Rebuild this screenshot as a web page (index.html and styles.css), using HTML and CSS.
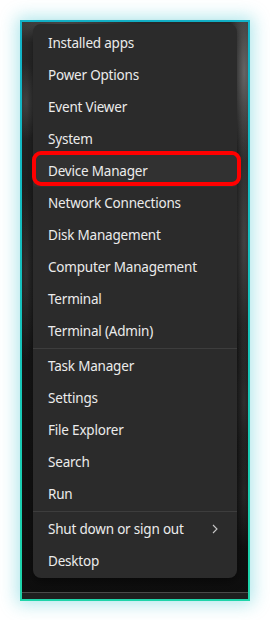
FILE: index.html
```html
<!DOCTYPE html>
<html>
<head>
<meta charset="utf-8">
<link rel="stylesheet" href="styles.css">
</head>
<body>
<div class="frame">
  <div class="desk">
    <div class="menu">
      <div class="item">Installed apps</div>
      <div class="item">Power Options</div>
      <div class="item">Event Viewer</div>
      <div class="item">System</div>
      <div class="item active">Device Manager</div>
      <div class="item">Network Connections</div>
      <div class="item">Disk Management</div>
      <div class="item">Computer Management</div>
      <div class="item">Terminal</div>
      <div class="item">Terminal (Admin)</div>
      <div class="sep"></div>
      <div class="item">Task Manager</div>
      <div class="item">Settings</div>
      <div class="item">File Explorer</div>
      <div class="item">Search</div>
      <div class="item">Run</div>
      <div class="sep"></div>
      <div class="item sub">Shut down or sign out
        <svg class="chev" width="6" height="10" viewBox="0 0 6 10"><path d="M1 1 L5 5 L1 9" fill="none" stroke="#c8c8c8" stroke-width="1.1"/></svg>
      </div>
      <div class="item">Desktop</div>
    </div>
    <div class="taskbar"></div>
  </div>
</div>
</body>
</html>
```
FILE: styles.css
```css
html, body {
  margin: 0;
  padding: 0;
  background: #ffffff;
}
body {
  width: 270px;
  height: 620px;
  overflow: hidden;
  font-family: "Segoe UI", "Noto Sans", "Liberation Sans", sans-serif;
}
.frame {
  margin: 20px 0 0 20px;
  width: 226px;
  height: 577px;
  border: 2px solid transparent;
  border-image: linear-gradient(180deg, #13b3c9 0%, #17c2bd 50%, #1fd4a9 100%) 1;
  box-shadow: 0 0 16px 3px rgba(30, 185, 200, 0.36);
}
.desk {
  height: 100%;
  display: flex;
  flex-direction: column;
  padding: 2px 11px 0 11px;
  box-sizing: border-box;
  background:
    radial-gradient(ellipse 16px 90px at 222px 50px, rgba(130,130,130,0.7), transparent),
    radial-gradient(ellipse 12px 140px at 222px 220px, rgba(110,110,110,0.5), transparent),
    radial-gradient(ellipse 10px 80px at 222px 380px, rgba(90,90,90,0.4), transparent),
    radial-gradient(ellipse 12px 40px at 4px 80px, rgba(110,110,110,0.4), transparent),
    radial-gradient(ellipse 10px 90px at 4px 250px, rgba(90,90,90,0.35), transparent),
    radial-gradient(ellipse 10px 60px at 222px 470px, rgba(80,80,80,0.35), transparent),
    radial-gradient(ellipse 80px 20px at 40px 2px, rgba(100,100,100,0.55), transparent),
    linear-gradient(180deg, #2a2a2a 0%, #1a1a1a 40%, #0e0e0e 100%);
}
.menu {
  background: #2b2b2b;
  border-radius: 8px;
  padding: 3px 0 1px 0;
  display: flex;
  flex-direction: column;
  box-shadow: 0 4px 10px rgba(0,0,0,0.4);
}
.item {
  height: 32px;
  line-height: 32px;
  padding-left: 15px;
  font-size: 13.5px;
  letter-spacing: -0.2px;
  color: #ececec;
  white-space: nowrap;
  position: relative;
  display: flex;
  align-items: center;
}
.item.active {
  background: #313131;
  border-radius: 4px;
}
.item.active::after {
  content: "";
  position: absolute;
  left: -1px;
  right: -4px;
  top: -4px;
  bottom: 1px;
  border: 4px solid #ff0000;
  border-radius: 9px;
}
.sub {
  justify-content: space-between;
  padding-right: 19px;
}
.sep {
  height: 1px;
  margin: 1px 0;
  background: #3d3d3d;
}
.taskbar {
  margin: 14px -11px 0 -11px;
  flex: 1;
  border-top: 1px solid #4a4a4a;
  background: #1e1e1e;
}
```
